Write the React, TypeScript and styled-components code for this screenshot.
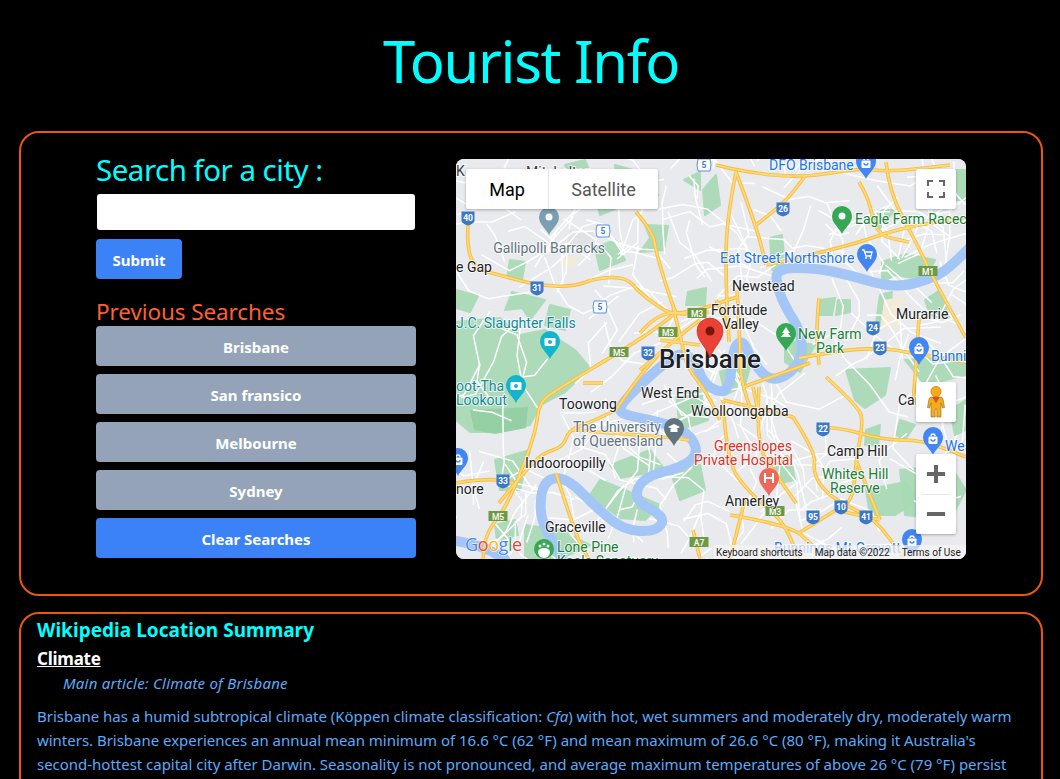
import React from "react";
import styled, { createGlobalStyle } from "styled-components";

const Global = createGlobalStyle`
  html, body { margin: 0; padding: 0; background: #000; overflow: hidden; height: 779px; }
  * { box-sizing: border-box; }
`;
const Page = styled.div`
  width: 1060px; background: #000; font-family: "Noto Sans", "Open Sans", sans-serif;
  padding: 21px 17px 0 19px;
`;
const Title = styled.h1`
  margin: 0 0 30px; height: 80px; line-height: 80px; text-align: center; color: #00ffff;
  font-size: 58px; font-weight: 400; letter-spacing: -1.35px; padding-left: 0;
`;
const Card = styled.section`
  border: 2px solid #ea580c; border-radius: 20px; background: #000;
`;
const SearchCard = styled(Card)`
  height: 465px; display: flex; gap: 40px; padding: 26px 0 0 75px; margin-bottom: 16px;
`;
const Side = styled.div`
  width: 320px; display: flex; flex-direction: column; align-items: stretch;
`;
const SearchTitle = styled.h2`
  margin: 0; height: 34px; line-height: 22px; font-size: 29.5px; font-weight: 400; color: #00ffff; letter-spacing: -0.5px;
`;
const CityInput = styled.input`
  width: 318px; height: 36px; margin: 1px 0 9px 1px; border: 0; border-radius: 3px; background: #fff; display: block;
`;
const ActionButton = styled.button<{ $tone: "blue" | "slate"; $small?: boolean }>`
  display: block; border: 0; border-radius: 4px; height: 40px; padding: 2px 0 0;
  width: ${(p) => (p.$small ? "86px" : "320px")};
  background: ${(p) => (p.$tone === "blue" ? "#3b82f6" : "#94a3b8")};
  color: #fff; font: 700 15px "Noto Sans", sans-serif; letter-spacing: 0;
`;
const PrevTitle = styled.h3`
  margin: 20px 0 0; height: 27px; line-height: 25px; font-size: 22.5px; font-weight: 400; color: #ff5f33; letter-spacing: -0.1px;
`;
const PrevList = styled.div`
  display: flex; flex-direction: column; gap: 8px;
`;
const MapFrame = styled.div`
  position: relative; width: 510px; height: 400px; border-radius: 8px; overflow: hidden; background: #e8eaed;
`;
const MapSvg = styled.svg`
  display: block; width: 510px; height: 400px;
`;
const MapTypes = styled.div`
  position: absolute; left: 10px; top: 10px; display: flex; height: 40px; background: #fff;
  box-shadow: 0 1px 3px rgba(0,0,0,.3); border-radius: 2px; font: 400 18px Roboto, sans-serif;
`;
const MapTab = styled.div<{ $active?: boolean }>`
  width: ${(p) => (p.$active ? "82px" : "110px")}; display: flex; align-items: center; justify-content: center;
  color: ${(p) => (p.$active ? "#000" : "#565656")};
  border-left: ${(p) => (p.$active ? "0" : "1px solid #e6e6e6")};
`;
const CtrlButton = styled.div<{ $top: number }>`
  position: absolute; left: 460px; top: ${(p) => p.$top}px; width: 40px; height: 40px; background: #fff;
  border-radius: 2px; box-shadow: 0 1px 3px rgba(0,0,0,.3); display: flex; align-items: center; justify-content: center;
`;
const ZoomBox = styled.div`
  position: absolute; left: 460px; top: 295px; width: 40px; height: 80px; background: #fff; border-radius: 2px;
  box-shadow: 0 1px 3px rgba(0,0,0,.3); display: flex; flex-direction: column; align-items: center;
`;
const ZoomCell = styled.div`
  height: 40px; width: 100%; display: flex; align-items: center; justify-content: center;
`;
const ZoomLine = styled.div`
  width: 30px; height: 1px; background: #e6e6e6; flex: none;
`;
const Attribution = styled.div`
  position: absolute; right: 0; bottom: 0; height: 14px; width: 252px; background: rgba(245,245,245,.72);
  display: flex; align-items: center; font: 400 10px Roboto, sans-serif; color: #222; white-space: nowrap;
  span:nth-child(1) { margin-left: 2px; }
  span:nth-child(2) { margin-left: 12px; }
  span:nth-child(3) { margin-left: 12px; }
`;
const SummaryCard = styled(Card)`
  height: 300px; padding: 3px 16px 0;
`;
const SummaryTitle = styled.h2`
  margin: 0; height: 26px; line-height: 26px; font-size: 19px; font-weight: 700; color: #00ffff; letter-spacing: 0.03px;
`;
const SectionTitle = styled.h3`
  margin: 4px 0 0; height: 24px; line-height: 24px; font-size: 17px; font-weight: 700; color: #fff; letter-spacing: -0.25px;
  text-decoration: underline;
`;
const Hatnote = styled.div`
  margin: 0 0 0 26px; height: 24px; line-height: 24px; font-size: 15px; font-style: italic; color: #5cabfa; letter-spacing: 0.23px;
`;
const Para = styled.p`
  margin: 9px 0 0; width: 990px; font-size: 15px; line-height: 24px; color: #5cabfa; letter-spacing: -0.02px; white-space: pre-line;
`;

/* turn "M x y L x y ..." into a path rounded through segment mid-points */
const smooth = (d: string) => {
  const n = d.match(/-?[\d.]+/g)!.map(Number);
  const p: [number, number][] = [];
  for (let i = 0; i < n.length; i += 2) p.push([n[i], n[i + 1]]);
  const mid = (a: [number, number], b: [number, number]) => `${(a[0] + b[0]) / 2} ${(a[1] + b[1]) / 2}`;
  let s = `M${p[0][0]} ${p[0][1]}`;
  for (let i = 1; i < p.length - 1; i++) s += `Q${p[i][0]} ${p[i][1]} ${mid(p[i], p[i + 1])}`;
  const l = p[p.length - 1];
  return s + `L${l[0]} ${l[1]}`;
};

/* a fixed pseudo-random street web, for the fine white grain of the map */
const makeStreets = () => {
  let seed = 91;
  const r = () => { seed = (seed * 1103515 + 12345) % 2147483648; return seed / 2147483648; };
  const out: string[] = [];
  for (let i = 0; i < 220; i++) {
    let x = 456 + r() * 510; let y = 159 + r() * 400;
    let ang = r() * 6.28;
    let s = `M${x.toFixed(1)} ${y.toFixed(1)}`;
    const steps = 2 + Math.floor(r() * 3);
    for (let j = 0; j < steps; j++) {
      const len = 12 + r() * 26;
      x += Math.cos(ang) * len; y += Math.sin(ang) * len;
      s += `L${x.toFixed(1)} ${y.toFixed(1)}`;
      ang += (r() - 0.5) * 2;
    }
    out.push(s);
  }
  return out;
};
const streets = makeStreets();

const greens = [
  "M456 322L500 318L520 335L545 330L575 350L590 368L565 392L540 405L530 425L500 432L470 432L456 420Z",
  "M615 165L640 172L634 182L658 195L640 206L618 190Z",
  "M645 225L668 226L664 250L640 252L650 238Z",
  "M510 260L525 262L522 280L507 278Z",
  "M512 292L545 300L530 320L522 308L505 310Z",
  "M550 305L570 310L565 330L545 325Z",
  "M595 195L620 180L625 205L600 215Z",
  "M688 292L706 288L705 305L686 305Z",
  "M703 190L716 175L720 205L705 215Z",
  "M684 180L700 172L700 190Z",
  "M770 238L782 235L785 265L772 270Z",
  "M882 262L905 254L935 260L925 280L895 275L882 282Z",
  "M880 295L892 292L888 325L875 330Z",
  "M878 210L895 210L880 228L865 222Z",
  "M925 170L966 170L966 200L940 200Z",
  "M925 300L940 290L950 320L930 315Z",
  "M846 370L890 368L885 395L865 408L855 400Z",
  "M866 490L905 482L920 500L895 515L870 515Z",
  "M900 470L950 465L966 490L950 520L905 515Z",
  "M905 360L966 355L966 375L925 385Z",
  "M600 480L625 490L660 505L645 520L620 518L590 495Z",
  "M610 465L650 450L665 470L620 478Z",
  "M495 460L530 450L520 490L500 490Z",
  "M525 525L560 530L590 545L560 559L525 559Z",
  "M676 395L700 390L708 420L680 430Z",
  "M565 165L585 160L590 172L575 182Z",
  "M785 340L815 345L800 372L785 362Z",
  "M820 300L835 298L832 315L818 315Z",
  "M770 460L790 455L795 480L770 485Z",
  "M670 470L700 465L705 490L680 500Z",
  "M595 248L615 240L625 260L600 270Z",
  "M838 300L850 300L850 312L836 315Z",
  "M720 372L752 360L745 385L725 395Z",
  "M950 410L966 400L966 430L955 435Z",
  "M900 420L915 425L905 440L896 435Z",
  "M866 430L880 425L878 445L865 445Z",
  "M456 290L478 296L470 312L456 308Z",
  "M495 525L515 520L518 535L497 540Z",
];
const darker = ["M470 410L528 407L526 428L495 434L474 430Z"];
const water = [
  "M972 245L950 268L929 280L893 288L849 275L816 268L775 268L778 290L787 310L800 330L803 357L787 377L767 380L750 357L743 340L733 347L730 387L720 393L703 383L695 360L680 352L660 367L640 385L622 403L619 413L640 418L663 423L689 433L699 453L683 467L643 477L633 500L666 517L656 532L623 530L596 507L566 477L543 480L539 517L556 547L565 565",
  "M456 541L480 545L505 559",
];
const major = [
  "M469 218L466 238L473 268L499 275L536 285L573 287L596 278L626 277L639 292L656 305L673 315L709 312",
  "M636 212L653 232L656 252L669 295L676 313",
  "M596 366L643 338L673 315",
  "M606 360L556 390L539 403L536 430L523 467L506 507L486 533L483 559",
  "M736 172L726 222L726 288L729 342",
  "M886 162L889 192L916 242L933 278L966 338",
  "M859 182L869 198L876 235L909 242",
  "M756 225L783 205L806 175",
  "M716 165L743 172L803 178L859 168L889 172L950 165",
  "M766 265L843 248L903 227L966 218",
  "M799 358L866 345L923 355L966 362",
  "M819 298L816 328L819 365",
  "M919 318L916 365L913 403",
  "M826 377L859 407L863 423L856 460L853 500L836 510L799 533",
  "M816 427L839 427L883 440L923 440L966 457",
  "M793 417L816 453L813 473L826 493L849 507L876 520L903 557",
  "M723 400L726 460L749 493L783 520L799 559",
  "M759 387L756 443L773 470L796 503",
  "M616 410L589 423L569 430L563 447L543 453L526 470L499 503",
  "M556 473L576 537L589 559",
  "M456 483L489 478L513 483",
  "M616 410L636 380L660 353",
  "M603 383L583 383",
  "M573 430L666 437L689 440",
  "M736 172L756 225L766 265",
  "M640 333L657 313L690 313L737 297",
  "M673 307L683 347L687 367L707 393L720 420",
  "M640 370L660 353L683 333L700 320",
  "M737 290L740 340L740 377L753 417",
  "M753 387L760 420",
  "M743 387L810 363",
  "M793 417L723 400",
  "M730 515L790 525L812 545",
  "M836 510L880 520",
  "M693 530L700 559",
  "M745 500L730 559",
  "M856 460L880 520",
  "M716 300L730 330",
  "M660 340L700 345",
];

const shields: [number, number, string][] = [
  [468, 218, "40"], [537, 288, "31"], [648, 353, "32"], [783, 209, "26"], [873, 328, "24"], [880, 348, "23"],
  [503, 481, "33"], [823, 429, "22"], [813, 517, "95"], [841, 507, "10"], [866, 517, "41"],
];
const hexes: [number, number][] = [[704, 165], [603, 231], [600, 307]];
const motor: [number, number, string][] = [
  [697, 313, "M3"], [668, 332, "M3"], [619, 352, "M5"], [498, 516, "M5"], [928, 271, "M1"], [775, 511, "M3"], [699, 542, "A7"],
];

const Label = ({ x, y, c = "#3c4043", s = 14, w = 400, a = "start", t }: { x: number; y: number; c?: string; s?: number; w?: number; a?: string; t: string }) => (
  <text x={x} y={y} fill={c} fontSize={s} fontWeight={w} textAnchor={a as "start"} fontFamily="Roboto, sans-serif"
    stroke="#fff" strokeWidth={1.8} paintOrder="stroke" strokeOpacity={0.8}>{t}</text>
);
const Pin = ({ x, y, c, children }: { x: number; y: number; c: string; children?: React.ReactNode }) => (
  <g transform={`translate(${x} ${y})`}>
    <path d="M0 14C-2.5 8-10 3.5-10-4a10 10 0 0 1 20 0C10 3.500 2.500 8 0 14Z" fill={c} />
    {children}
  </g>
);
const BagIcon = () => (
  <g fill="none" stroke="#fff" strokeWidth="1.400"><rect x="-4.500" y="-4.500" width="9" height="7.500" rx="1" fill="#fff" stroke="none" /><path d="M-2-5a2 2 0 0 1 4 0" /><path d="M-2-2a2 2 0 0 0 4 0" stroke="#4285f4" /></g>
);
const CamIcon = () => (
  <g><rect x="-5.500" y="-7" width="11" height="8" rx="1.200" fill="#fff" /><circle cy="-3" r="2" fill="#12b5cb" /></g>
);

const MapDrawing = () => (
  <MapSvg viewBox="456 159 510 400">
    <rect x="456" y="159" width="510" height="400" fill="#e8eaed" />
    {greens.map((d) => <path key={d} d={d} fill="#a8dab5" stroke="#a8dab5" strokeWidth="2" strokeLinejoin="round" opacity=".92" />)}
    {darker.map((d) => <path key={d} d={d} fill="#94d0a4" />)}
    <path d="M570 230L600 232L590 250L565 250Z" fill="#dadce0" opacity=".6" />
    <path d="M884 300L905 296L900 325L880 330Z" fill="#f1ebd8" />
    <path d="M560 258L578 256L574 268L562 266Z" fill="#f1ebd8" />
    {streets.map((d) => <path key={d} d={d} fill="none" stroke="#fff" strokeWidth="1.500" />)}
    {water.map((d) => <path key={d} d={smooth(d)} fill="none" stroke="#a4c6f6" strokeWidth="10" strokeLinejoin="round" strokeLinecap="round" />)}
    {major.map((d) => <path key={d} d={smooth(d)} fill="none" stroke="#f7bd3e" strokeWidth="3.600" />)}
    {major.map((d) => <path key={d + "i"} d={smooth(d)} fill="none" stroke="#fdd978" strokeWidth="1.800" />)}

    {shields.map(([x, y, t]) => (
      <g key={t + x} transform={`translate(${x} ${y})`}>
        <path d="M-6.500-6.500H6.500V2.500Q6.500 5.500 0 7.500Q-6.500 5.500-6.500 2.500Z" fill="#3b78c9" />
        <text y="2.500" textAnchor="middle" fill="#fff" fontSize="8.500" fontWeight="700" fontFamily="Roboto, sans-serif">{t}</text>
      </g>
    ))}
    {hexes.map(([x, y]) => (
      <g key={x} transform={`translate(${x} ${y})`}>
        <path d="M-6-6H6L7 0L6 6H-6L-7 0Z" fill="#fff" stroke="#5a8fdc" strokeWidth="1" />
        <text y="3" textAnchor="middle" fill="#3b78c9" fontSize="8.500" fontWeight="700" fontFamily="Roboto, sans-serif">5</text>
      </g>
    ))}
    {motor.map(([x, y, t]) => (
      <g key={t + x + y} transform={`translate(${x} ${y})`}>
        <rect x="-9.500" y="-5" width="19" height="10" fill="#6f9a45" />
        <text y="3.500" textAnchor="middle" fill="#fff" fontSize="8.500" fontWeight="500" fontFamily="Roboto, sans-serif">{t}</text>
      </g>
    ))}

    <Label x={526} y={177} t="Mitchelton" />
    <Label x={456} y={176} t="K" />
    <Label x={456} y={272} t="e Gap" c="#202124" />
    <Pin x={549} y={221} c="#7b9eb2"><circle cy="-4" r="3.500" fill="#fff" /></Pin>
    <Label x={549} y={253} a="middle" c="#5f7480" t="Gallipolli Barracks" />
    <Label x={456} y={328} c="#0e8a9a" t="J.C. Slaughter Falls" />
    <Pin x={550} y={345} c="#12b5cb"><CamIcon /></Pin>
    <Pin x={516} y={389} c="#12b5cb"><CamIcon /></Pin>
    <Label x={456} y={391} c="#0e8a9a" t="oot-Tha" />
    <Label x={456} y={405} c="#0e8a9a" t="Lookout" />
    <Label x={559} y={409} t="Toowong" c="#202124" />
    <Label x={641} y={398} t="West End" c="#202124" />
    <Label x={691} y={416} t="Woolloongabba" c="#202124" />
    <Label x={573} y={432} c="#5f7480" t="The University" />
    <Label x={573} y={446} c="#5f7480" t="of Queensland" />
    <Pin x={674} y={432} c="#5f7480"><path d="M-6-5L0-8L6-5L0-2Z" fill="#fff" /><path d="M-3.500-3V0H3.500V-3" fill="#fff" /></Pin>
    <Label x={525} y={468} t="Indooroopilly" c="#202124" />
    <Label x={456} y={494} t="nore" c="#202124" />
    <Pin x={458} y={462} c="#4285f4"><BagIcon /></Pin>
    <Label x={545} y={532} t="Graceville" c="#202124" />
    <circle cx="544" cy="549" r="10" fill="#34a853" />
    <path d="M538 552a6 4 0 0 1 12 0a3 3 0 0 1-12 0Z" fill="#fff" />
    <circle cx="540" cy="546" r="1.500" fill="#fff" /><circle cx="548" cy="546" r="1.500" fill="#fff" /><circle cx="544" cy="544" r="1.500" fill="#fff" />
    <Label x={557} y={552} c="#188038" t="Lone Pine" />
    <Label x={557} y={566} c="#188038" t="Koala Sanctuary" />
    <text x="465" y="551" fontFamily="Open Sans, sans-serif" fontSize="18" fontWeight="500" stroke="#fff" strokeWidth="1" paintOrder="stroke" letterSpacing="-.4">
      <tspan fill="#4285f4">G</tspan><tspan fill="#ea4335">o</tspan><tspan fill="#fbbc05">o</tspan><tspan fill="#4285f4">g</tspan><tspan fill="#34a853">l</tspan><tspan fill="#ea4335">e</tspan>
    </text>

    <Label x={769} y={170} c="#1a73e8" t="DFO Brisbane" />
    <Pin x={866} y={165} c="#4285f4"><BagIcon /></Pin>
    <Pin x={842} y={220} c="#34a853"><circle cy="-4" r="3.500" fill="#fff" /></Pin>
    <Label x={855} y={224} c="#188038" t="Eagle Farm Racecourse" />
    <Label x={720} y={263} c="#1a73e8" t="Eat Street Northshore" />
    <Pin x={867} y={258} c="#4285f4"><path d="M-5-8H-3L-1-2H4L5-6H-2" fill="none" stroke="#fff" strokeWidth="1.300" /><circle cx="-1" cy="0" r="1" fill="#fff" /><circle cx="3.500" cy="0" r="1" fill="#fff" /></Pin>
    <Label x={732} y={291} c="#202124" t="Newstead" />
    <Label x={711} y={315} c="#202124" t="Fortitude" />
    <Label x={722} y={329} c="#202124" t="Valley" />
    <Label x={896} y={319} c="#202124" t="Murarrie" />
    <Pin x={786} y={337} c="#34a853"><path d="M0-10L4-4H2L5 0H-5L-2-4H-4Z" fill="#fff" /></Pin>
    <Label x={798} y={339} c="#188038" t="New Farm" />
    <Label x={816} y={353} c="#188038" t="Park" />
    <Pin x={919} y={351} c="#4285f4"><BagIcon /></Pin>
    <Label x={931} y={361} c="#1a73e8" t="Bunnings" />
    <Label x={898} y={405} c="#202124" t="Carina" />
    <Pin x={933} y={441} c="#4285f4"><BagIcon /></Pin>
    <Label x={945} y={451} c="#1a73e8" t="West" />
    <Label x={827} y={456} c="#202124" t="Camp Hill" />
    <Label x={822} y={479} c="#188038" t="Whites Hill" />
    <Label x={830} y={493} c="#188038" t="Reserve" />
    <Label x={714} y={451} c="#d93025" t="Greenslopes" />
    <Label x={694} y={465} c="#d93025" t="Private Hospital" />
    <Pin x={769} y={482} c="#ee675c"><path d="M-4-9V1M4-9V1M-4-4H4" stroke="#fff" strokeWidth="2" fill="none" /></Pin>
    <Label x={725} y={506} c="#202124" t="Annerley" />
    <Label x={945} y={522} c="#202124" t="in" />
    <Label x={774} y={553} c="#1a73e8" t="Bunnings Mt Gravatt" />
    <Pin x={912} y={543} c="#4285f4"><BagIcon /></Pin>

    <Label x={710} y={368} a="middle" c="#202124" s={25.800} w={500} t="Brisbane" />
    <path d="M710 358C706 346 697 341 697 331a13 13 0 0 1 26 0C723 341 714 346 710 358Z" fill="#ea4335" stroke="#c5221f" strokeWidth=".6" />
    <circle cx="710" cy="331" r="4.500" fill="#7b1410" />
  </MapSvg>
);

const Pegman = () => (
  <svg width="18" height="32" viewBox="0 0 18 32">
    <circle cx="9" cy="5.500" r="5.200" fill="#f5ab1a" stroke="#a8740f" strokeWidth=".5" />
    <path d="M4.500 11H13.500Q15.500 11 16 13L17.500 21.500L15.500 22L14 17V31H9.800V23H8.200V31H4V17L2.500 22L.5 21.500L2 13Q2.500 11 4.500 11Z" fill="#f5ab1a" stroke="#8a6a2a" strokeWidth=".6" />
    <path d="M5 11L9 17L13 11Z" fill="#d9541e" />
  </svg>
);
const FullscreenIcon = () => (
  <svg width="18" height="18" viewBox="0 0 18 18" fill="none" stroke="#666" strokeWidth="2">
    <path d="M1 6V1H6M12 1H17V6M17 12V17H12M6 17H1V12" />
  </svg>
);
const PlusIcon = () => (
  <svg width="18" height="18" viewBox="0 0 18 18"><path d="M0 7H7V0H11V7H18V11H11V18H7V11H0Z" fill="#666" /></svg>
);
const MinusIcon = () => (
  <svg width="18" height="4" viewBox="0 0 18 4"><rect width="18" height="4" fill="#666" /></svg>
);

export default function App() {
  return (
    <Page>
      <Global />
      <Title>Tourist Info</Title>
      <SearchCard>
        <Side>
          <SearchTitle>Search for a city :</SearchTitle>
          <CityInput aria-label="City" />
          <ActionButton $tone="blue" $small>Submit</ActionButton>
          <PrevTitle>Previous Searches</PrevTitle>
          <PrevList>
            {["Brisbane", "San fransico", "Melbourne", "Sydney"].map((c) => (
              <ActionButton key={c} $tone="slate">{c}</ActionButton>
            ))}
            <ActionButton $tone="blue">Clear Searches</ActionButton>
          </PrevList>
        </Side>
        <MapFrame>
          <MapDrawing />
          <MapTypes>
            <MapTab $active>Map</MapTab>
            <MapTab>Satellite</MapTab>
          </MapTypes>
          <CtrlButton $top={10}><FullscreenIcon /></CtrlButton>
          <CtrlButton $top={223}><Pegman /></CtrlButton>
          <ZoomBox>
            <ZoomCell><PlusIcon /></ZoomCell>
            <ZoomLine />
            <ZoomCell><MinusIcon /></ZoomCell>
          </ZoomBox>
          <Attribution>
            <span>Keyboard shortcuts</span>
            <span>Map data ©2022</span>
            <span>Terms of Use</span>
          </Attribution>
        </MapFrame>
      </SearchCard>
      <SummaryCard>
        <SummaryTitle>Wikipedia Location Summary</SummaryTitle>
        <SectionTitle>Climate</SectionTitle>
        <Hatnote>Main article: Climate of Brisbane</Hatnote>
        <Para>
          Brisbane has a humid subtropical climate (Köppen climate classification: <em>Cfa</em>) with hot, wet summers and moderately dry, moderately warm{"\n"}
          winters. Brisbane experiences an annual mean minimum of 16.6 °C (62 °F) and mean maximum of 26.6 °C (80 °F), making it Australia's{"\n"}
          second-hottest capital city after Darwin. Seasonality is not pronounced, and average maximum temperatures of above 26 °C (79 °F) persist{"\n"}
          from October through to April.
        </Para>
      </SummaryCard>
    </Page>
  );
}
